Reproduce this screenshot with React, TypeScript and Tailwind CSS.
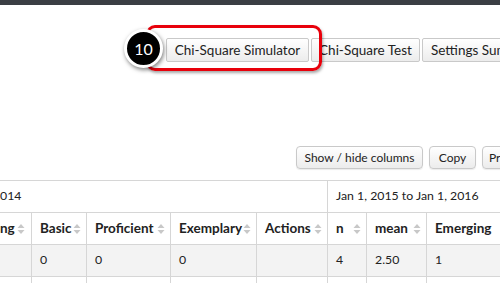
import React from "react";

const font = { fontFamily: "Lato, 'Open Sans', sans-serif" };

function SortIcon() {
  return (
    <svg width="8" height="12" viewBox="0 0 8 12" className="shrink-0">
      <path d="M4 1 L7.5 5 L0.5 5 Z" fill="#c8c8c8" />
      <path d="M4 11 L7.5 7 L0.5 7 Z" fill="#c8c8c8" />
    </svg>
  );
}

const cols = [32, 55, 84, 86, 71, 39, 60, 120];
const heads = ["ng", "Basic", "Proficient", "Exemplary", "Actions", "n", "mean", "Emerging"];
const data = ["", "0", "0", "0", "", "4", "2.50", "1"];

const topBtn =
  "h-[24px] shrink-0 text-[13.5px] border border-[#c9c9c9] rounded-[2px] bg-gradient-to-b from-white to-[#ececec]";
const subBtn =
  "h-[23px] shrink-0 text-[12px] border border-[#c9c9c9] rounded-[4px] bg-gradient-to-b from-white to-[#ececec] shadow-[0_1px_1px_rgba(0,0,0,0.08)]";

export default function App() {
  return (
    <div className="relative w-[500px] h-[283px] overflow-hidden bg-white text-[#222]" style={font}>
      <div className="h-[5px] bg-[#3b3e44]" />
      <div className="flex gap-[2px] pl-[166px] pt-[33px] whitespace-nowrap">
        <button className={`${topBtn} w-[143px]`}>Chi-Square Simulator</button>
        <button className={`${topBtn} w-[109px]`}>Chi-Square Test</button>
        <button className={`${topBtn} px-[8px]`}>Settings Summary</button>
      </div>
      <div className="flex gap-[6px] pl-[296px] pt-[84px] whitespace-nowrap">
        <button className={`${subBtn} w-[127px]`}>Show / hide columns</button>
        <button className={`${subBtn} w-[47px]`}>Copy</button>
        <button className={`${subBtn} px-[6px] text-left`}>Print</button>
      </div>
      <div className="mt-[11px] border-t border-[#d6d6d6] text-[12.3px]">
        <div className="flex h-[32px] border-b border-[#d6d6d6]">
          <div className="w-[328px] shrink-0 flex items-center pl-0 border-r border-[#d6d6d6]">014</div>
          <div className="flex items-center pl-[8px] whitespace-nowrap">Jan 1, 2015 to Jan 1, 2016</div>
        </div>
        <div className="flex h-[32px] border-b border-[#d6d6d6] font-bold text-[13.5px] whitespace-nowrap">
          {heads.map((h, i) => (
            <div
              key={i}
              className={`flex items-center justify-between shrink-0 ${i === 0 ? "pl-0 pr-[6px]" : "pl-[8px] pr-[5px]"} ${i < 7 ? "border-r border-[#d6d6d6]" : ""}`}
              style={{ width: cols[i] }}
            >
              <span>{h}</span>
              {i < 7 ? <SortIcon /> : <span className="ml-[12px] mr-auto"><SortIcon /></span>}
            </div>
          ))}
        </div>
        <div className="flex h-[32px] border-b border-[#d6d6d6] bg-[#f3f3f3]">
          {data.map((d, i) => (
            <div key={i} className={`flex items-center shrink-0 pl-[8px] ${i < 7 ? "border-r border-[#d6d6d6]" : ""}`} style={{ width: cols[i] }}>
              {d}
            </div>
          ))}
        </div>
        <div className="flex h-[10px]">
          {data.map((d, i) => (
            <div key={i} className={`shrink-0 ${i < 7 ? "border-r border-[#d6d6d6]" : ""}`} style={{ width: cols[i] }} />
          ))}
        </div>
      </div>
      <div className="absolute left-[146px] top-[25px] w-[176px] h-[46px] border-[3px] border-[#e8000b] rounded-[9px] shadow-[1px_2px_3px_rgba(0,0,0,0.35)]" />
      <div className="absolute left-[124px] top-[29px] w-[39px] h-[39px] rounded-full bg-black border-[3px] border-white shadow-[1px_2px_4px_rgba(0,0,0,0.5)] flex items-center justify-center text-white text-[16px]">
        10
      </div>
    </div>
  );
}
